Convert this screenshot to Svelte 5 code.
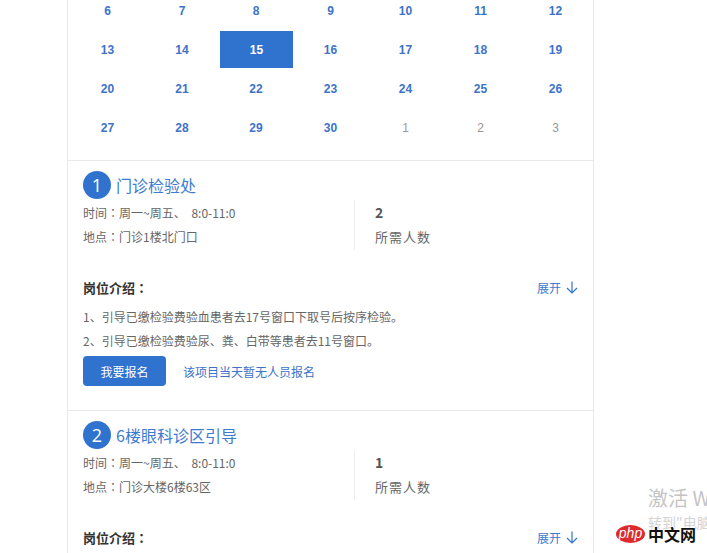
<script>
const calendar = [
  [6, 7, 8, 9, 10, 11, 12],
  [13, 14, 15, 16, 17, 18, 19],
  [20, 21, 22, 23, 24, 25, 26],
  [27, 28, 29, 30, 1, 2, 3]
];

const jobs = [
  {
    id: 1,
    title: "门诊检验处",
    place: "门诊1楼北门口",
    people: 2,
    notes: ["1、引导已缴检验费验血患者去17号窗口下取号后按序检验。", "2、引导已缴检验费验尿、粪、白带等患者去11号窗口。"]
  },
  {
    id: 2,
    title: "6楼眼科诊区引导",
    place: "门诊大楼6楼63区",
    people: 1,
    notes: []
  }
];
</script>

<div class="page">
  <div class="panel">
    <div class="calendar">
      {#each calendar as week, w}
        <div class="week">
          {#each week as day, d}
            <div class="day" class:active={day === 15} class:other={w === 3 && d > 3}>
              {day}
            </div>
          {/each}
        </div>
      {/each}
    </div>

    {#each jobs as job}
      <div class="job">
        <div class="job-title">
          <span class="num">{job.id}</span>
          <span class="name">{job.title}</span>
        </div>
        <div class="info">
          <div class="info-left">
            <p>时间<span class="colon">：</span>周一~周五、 8:0-11:0</p>
            <p>地点<span class="colon">：</span>{job.place}</p>
          </div>
          <div class="info-right">
            <strong>{job.people}</strong>
            <p>所需人数</p>
          </div>
        </div>
        <div class="intro-head">
          <span class="intro-label">岗位介绍<span class="colon">：</span></span>
          <span class="toggle">
            展开
            <svg width="12" height="13" viewBox="0 0 12 13" fill="none" stroke="#2f72ce" stroke-width="1.2">
              <path d="M6 0.5V12M1 7l5 5 5-5" />
            </svg>
          </span>
        </div>
        {#if job.notes.length}
          <div class="notes">
            {#each job.notes as note}
              <p>{note}</p>
            {/each}
          </div>
          <div class="actions">
            <button type="button">我要报名</button>
            <span class="hint">该项目当天暂无人员报名</span>
          </div>
        {/if}
      </div>
    {/each}
  </div>

  <div class="watermark">
    <div class="wm-big">激活 W</div>
    <div class="wm-small">转到"电脑</div>
  </div>

  <div class="logo">
    <span class="logo-php">php</span>
    <span class="logo-cn">中文网</span>
  </div>
</div>

<style>
:global(body) {
  margin: 0;
  background: #fff;
  overflow: hidden;
}

.page {
  position: relative;
  width: 707px;
  height: 553px;
  overflow: hidden;
  font-family: "Noto Sans CJK SC", "Noto Sans", sans-serif;
  font-size: 12px;
  color: #666;
}

.panel {
  width: 525px;
  margin-left: 67px;
  margin-top: -9px;
  border-left: 1px solid #e9e9e9;
  border-right: 1px solid #e9e9e9;
}

.calendar {
  padding: 0 0 13px 2px;
  font-family: "Liberation Sans", Arial, sans-serif;
}

.week {
  display: grid;
  grid-template-columns: 75px 74px 74px 75px 75px 75px 75px;
  height: 39px;
}

.day {
  display: flex;
  align-items: center;
  justify-content: center;
  font-weight: 700;
  color: #3d73c9;
}

.day.active {
  background: #3073cf;
  color: #fff;
  margin: 1px 0 1px 1px;
}

.day.other {
  font-weight: 400;
  color: #999;
}

.job {
  border-top: 1px solid #e9e9e9;
  padding: 10px 15px 24px;
}

.job-title {
  display: flex;
  align-items: center;
  height: 28px;
}

.num {
  width: 28px;
  height: 28px;
  border-radius: 50%;
  background: #3073cf;
  color: #fff;
  font-family: "Open Sans", sans-serif;
  font-size: 18px;
  line-height: 28px;
  text-align: center;
}

.name {
  margin-left: 5px;
  font-size: 16px;
  color: #3d7bd0;
}

.colon {
  font-family: "Noto Sans CJK TC", sans-serif;
}

.info {
  display: flex;
  margin-top: 1px;
  height: 50px;
}

.info p {
  margin: 0;
  line-height: 24px;
}

.info-left {
  width: 271px;
  padding-top: 1px;
  word-spacing: 3px;
}

.info-right {
  border-left: 1px solid #eee;
  padding-left: 20px;
}

.info-right strong {
  display: block;
  font-size: 14px;
  line-height: 24px;
  color: #555;
}

.info-right p {
  margin-top: 1px;
  font-size: 13px;
  letter-spacing: 1px;
}

.intro-head {
  display: flex;
  justify-content: space-between;
  align-items: center;
  margin-top: 27px;
  height: 20px;
}

.intro-label {
  font-size: 13px;
  font-weight: 700;
  color: #333;
}

.toggle {
  display: flex;
  align-items: center;
  gap: 5px;
  color: #3d7bd0;
}

.notes {
  margin-top: 8px;
}

.notes p {
  margin: 0;
  line-height: 24px;
}

.actions {
  display: flex;
  align-items: center;
  margin-top: 3px;
}

button {
  width: 83px;
  height: 30px;
  border: 0;
  border-radius: 4px;
  background: #3073cf;
  color: #fff;
  font: inherit;
  padding: 0;
}

.hint {
  margin-left: 17px;
  color: #3d73c9;
}

.watermark {
  position: absolute;
  left: 648px;
  top: 484px;
  color: #c4c4c4;
  white-space: nowrap;
}

.wm-big {
  font-size: 20px;
  line-height: 28px;
}

.wm-small {
  font-size: 14px;
  line-height: 20px;
  color: #d4d4d4;
}

.logo {
  position: absolute;
  left: 616px;
  top: 525px;
  display: flex;
  align-items: center;
}

.logo-php {
  width: 29px;
  height: 18px;
  border-radius: 50%;
  background: #dd2a2a;
  color: #fff;
  font-family: "Liberation Sans", Arial, sans-serif;
  font-style: italic;
  font-size: 14px;
  line-height: 16px;
  text-align: center;
}

.logo-cn {
  margin-left: 3px;
  font-size: 16px;
  font-weight: 700;
  line-height: 18px;
  color: #111;
  text-shadow: 0 0 2px #fff, 0 0 2px #fff;
}
</style>
